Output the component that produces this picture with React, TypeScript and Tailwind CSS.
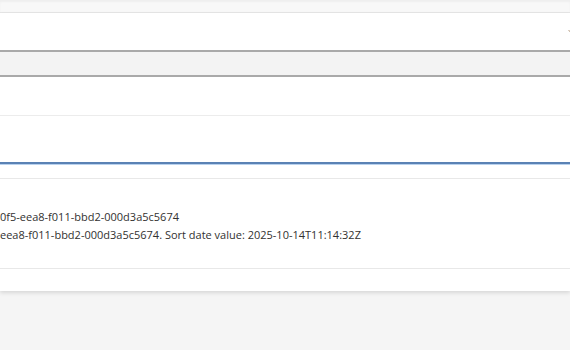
import { ChevronDown } from 'lucide-react';

export default function App() {
  return (
    <div
      className="w-[570px] h-[350px] overflow-hidden bg-[#f5f5f5] text-[#323130]"
      style={{ fontFamily: '"Open Sans", "Noto Sans", sans-serif' }}
    >
      {/* top strip */}
      <div className="h-[13px] bg-[#f8f8f8] border-b border-[#e6e6e6] shadow-[inset_0_2px_2px_rgba(0,0,0,0.04)]" />

      {/* card */}
      <div className="bg-white shadow-[0_2px_4px_rgba(0,0,0,0.12)]">
        {/* filter row */}
        <div className="h-[37px] flex items-center justify-end">
          <ChevronDown className="w-3 h-3 text-[#a08060] -mr-[8px]" strokeWidth={2} />
        </div>

        {/* header band */}
        <div className="h-[27px] bg-[#f3f3f3] border-y-2 border-[#a9a9a9]" />

        <div className="h-[39px] border-b border-[#ececec]" />

        {/* input-like row */}
        <div className="h-[48px] border-b-2 border-[#5a82b4] shadow-[0_1px_0_#b9d2ee]" />

        <div className="h-[15px] border-b border-[#e8e8e8]" />

        {/* detail block */}
        <div className="h-[90px] flex flex-col justify-center pt-[5px] border-b border-[#e8e8e8] text-[11px] leading-[18px] whitespace-nowrap">
          <div>0f5-eea8-f011-bbd2-000d3a5c5674</div>
          <div>eea8-f011-bbd2-000d3a5c5674. Sort date value: 2025-10-14T11:14:32Z</div>
        </div>

        <div className="h-[22px]" />
      </div>
    </div>
  );
}
